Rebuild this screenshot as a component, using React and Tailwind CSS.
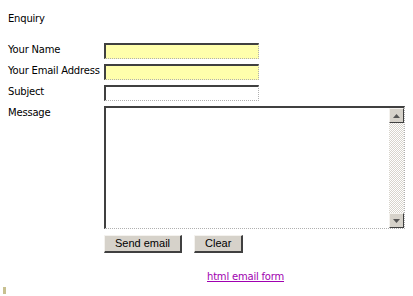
import React from "react";

const inset =
  "border-t-2 border-l-2 border-t-[#404040] border-l-[#404040] border-b border-r border-b-[#b0b0b0] border-r-[#b0b0b0] [border-bottom-style:dotted] [border-right-style:dotted]";

const Field = ({ label, yellow }) => (
  <>
    <label className="pt-[1px] leading-[12px] whitespace-nowrap">{label}</label>
    <input
      type="text"
      className={`w-[155px] h-[16px] outline-none ${inset} ${yellow ? "bg-[#ffffac]" : "bg-white"}`}
    />
  </>
);

const Btn = ({ children }) => (
  <button
    type="button"
    className="h-[18px] px-[10px] bg-[#d6d2ca] text-[11px] text-black leading-none tracking-normal border border-t-[#f4f2ee] border-l-[#f4f2ee] border-b-[#404040] border-r-[#404040] border-b-2 border-r-2 font-['Liberation_Sans',Arial,sans-serif]"
  >
    {children}
  </button>
);

const App = () => {
  return (
    <div className="w-[413px] h-[296px] bg-white relative overflow-hidden text-[10px] tracking-[-0.2px] text-black font-['DejaVu_Sans',Verdana,sans-serif]">
      <div className="pl-[8px] pt-[13px]">
        <div className="leading-[12px]">Enquiry</div>
        <form className="mt-[18px] grid grid-cols-[96px_auto] gap-y-[5px] items-start">
          <Field label="Your Name" yellow />
          <Field label="Your Email Address" yellow />
          <Field label="Subject" />
          <label className="pt-[1px] leading-[12px]">Message</label>
          <div className={`w-[301px] h-[123px] flex bg-white ${inset}`}>
            <textarea className="flex-1 resize-none outline-none bg-white" />
            <div className="w-[15px] flex flex-col bg-[#e6e2dc] [background-image:repeating-conic-gradient(#ffffff_0_25%,#d8d4cc_0_50%)] [background-size:2px_2px]">
              <div className="h-[15px] bg-[#d6d2ca] border border-t-[#f4f2ee] border-l-[#f4f2ee] border-b-[#404040] border-r-[#404040] flex items-center justify-center">
                <svg width="7" height="4" viewBox="0 0 7 4"><path d="M3.5 0L7 4H0z" fill="#555" /></svg>
              </div>
              <div className="flex-1" />
              <div className="h-[15px] bg-[#d6d2ca] border border-t-[#f4f2ee] border-l-[#f4f2ee] border-b-[#404040] border-r-[#404040] flex items-center justify-center">
                <svg width="7" height="4" viewBox="0 0 7 4"><path d="M0 0H7L3.5 4z" fill="#555" /></svg>
              </div>
            </div>
          </div>
          <div />
          <div className="flex gap-[12px] mt-[1px]">
            <Btn>Send email</Btn>
            <Btn>Clear</Btn>
          </div>
        </form>
        <div className="mt-[16px] pl-[199px]">
          <a href="#" className="text-[#a000b0] underline leading-[12px]">html email form</a>
        </div>
      </div>
      <div className="absolute left-[3px] top-[287px] w-[3px] h-[7px] bg-[#c8c090]" />
    </div>
  );
};

export default App;
